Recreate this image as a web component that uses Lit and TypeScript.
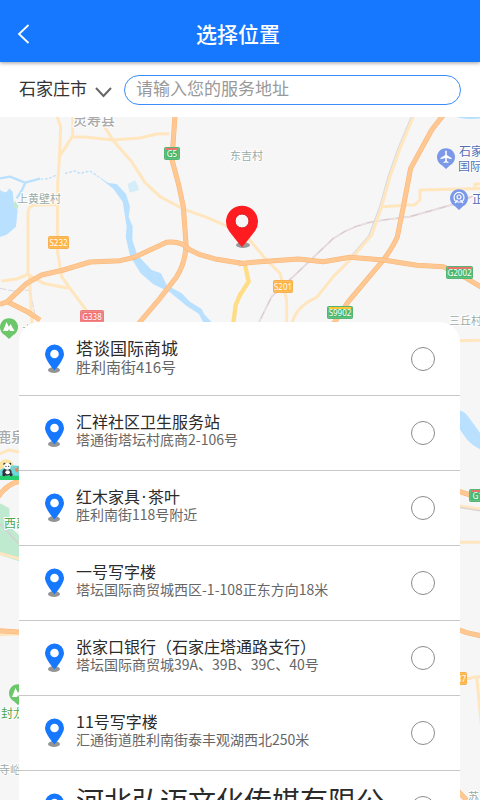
import { LitElement, html, svg, css } from "lit";
import { customElement, property, state } from "lit/decorators.js";
import { classMap } from "lit/directives/class-map.js";

interface Place {
  name: string;
  address: string;
  size?: "current" | "large";
}

const PLACES: Place[] = [
  { name: "塔谈国际商城", address: "胜利南街416号", size: "current" },
  { name: "汇祥社区卫生服务站", address: "塔通街塔坛村底商2-106号" },
  { name: "红木家具·茶叶", address: "胜利南街118号附近" },
  { name: "一号写字楼", address: "塔坛国际商贸城西区-1-108正东方向18米" },
  { name: "张家口银行（石家庄塔通路支行）", address: "塔坛国际商贸城39A、39B、39C、40号" },
  { name: "11号写字楼", address: "汇通街道胜利南街泰丰观湖西北250米" },
  { name: "河北弘迈文化传媒有限公", address: "塔坛国际商贸城", size: "large" },
];

/** Map canvas: roads, water, badges and labels. */
@customElement("city-map")
class CityMap extends LitElement {
  static styles = css`
    :host { display: block; background: #f6f6f6; }
    svg { display: block; width: 100%; height: 100%; }
    text { font-family: "Noto Sans CJK SC", sans-serif; font-size: 11px; paint-order: stroke; stroke: #fff; stroke-width: 2px; stroke-linejoin: round; }
    .road { fill: none; stroke-linejoin: round; stroke-linecap: butt; }
    .minor { stroke: #ffe6bf; stroke-width: 9; }
    .major-edge { stroke: #f8b779; stroke-width: 15; }
    .major { stroke: #ffc791; stroke-width: 12; }
    .yellow { stroke: #ffdc86; stroke-width: 13; }
    .rail { stroke: #dccccf; stroke-width: 5; }
    .rail-dash { stroke: #eee6e7; stroke-width: 3; stroke-dasharray: 22 22; }
    .bypass { stroke: #d9dcdf; stroke-width: 4; }
    .water { fill: #b9e1ff; }
    .stream { stroke: #b9e1ff; stroke-width: 7; }
    .dots { stroke: #b9e1ff; stroke-width: 4; stroke-dasharray: 8 5; }
    .town { fill: #a9a9a9; font-size: 14px; font-weight: 500; }
    .village { fill: #9aaba6; }
    .poi { fill: #5470b5; font-size: 12px; }
    .park { fill: #4fa552; font-size: 12px; }
    .badge { fill: #fff; font-size: 8px; stroke: none; text-anchor: middle; font-family: "Noto Sans", sans-serif; }
  `;

  private badge(x: number, y: number, w: number, label: string, fill: string, edge: string, top?: string) {
    return svg`
      <rect x=${x} y=${y} width=${w} height="13" rx="2" fill=${edge}></rect>
      <rect x=${x + 1} y=${y + 1} width=${w - 2} height="11" rx="1" fill=${fill} stroke="#fff" stroke-opacity=".5" stroke-width=".5"></rect>
      ${top ? svg`<rect x=${x + 2} y=${y + 1} width=${w - 4} height="2" fill=${top}></rect>` : ""}
      <text class="badge" x=${x + w / 2} y=${y + 10}>${label}</text>`;
  }

  private major(d: string) {
    return svg`<path class="road major-edge" d=${d}></path><path class="road major" d=${d}></path>`;
  }

  private marker(x: number, y: number, fill: string, glyph: unknown) {
    return svg`<g transform="translate(${x} ${y})">
      <path d="M0 12 L-4 8.2 A9 9 0 1 1 4 8.2Z" fill=${fill}></path>${glyph}</g>`;
  }

  render() {
    const tree = svg`<path d="M-6 4 L-2.500 -5 L0 0 L1.500 -3 L5.500 4 H1 L0 2 L-1 4Z" fill="#fff"></path>`;
    return html`<svg viewBox="0 117 480 683" preserveAspectRatio="xMidYMin slice" aria-hidden="true">
      <g transform="translate(0 110) scale(.33333)">
        <path class="water" d="M0 240 L12 247 L20 246 L28 235 L38 245 L42 280 L53 298 L48 350 L20 374 L0 381Z"></path>
        <path d="M38 290 L46 272 L56 290 L50 296Z" fill="#bfead0"></path>
        <path class="road stream" d="M0 205 L30 200 L75 218 L120 206 M76 218 L66 240 L50 265"></path>
        <path class="road dots" d="M122 208 L145 206 L170 195 M195 190 L225 183 L240 190 L270 183 L295 200"></path>
        <path class="water" d="M285 193 L325 219 L350 222 L378 252 L390 290 L386 320 L398 350 L397 390 L412 435 L455 480 L483 490 L500 525 L545 550 L570 575 L605 597 L612 612 L640 642 L612 642 L597 612 L560 588 L510 547 L460 523 L422 490 L390 438 L377 380 L380 350 L368 275 L340 236Z"></path>
        <path d="M383 222 L405 211 L413 225 L417 240 L389 248Z" fill="#d5edf9"></path>
        <path d="M0 535 L40 543 L90 540 L104 610" class="road" stroke="#d7d7df" stroke-width="3" stroke-dasharray="20 5"></path>
        <path class="road minor" d="M170 15 L182 50 L178 150 L173 220 L172 420 L185 500 L210 535 L262 605"></path>
        <path class="road minor" d="M218 15 V78 L178 140 M218 80 L260 82 L340 90 L420 84 L470 72 L508 71"></path>
        <path class="road minor" d="M310 45 L340 92 L395 155 L435 218 L480 260 L550 297 L620 322 L690 352"></path>
        <path class="road minor" d="M170 284 L104 285 Q84 287 84 310 V490 M5 513 L50 507 L84 493 L130 520 L205 535 M88 495 L96 640"></path>
        <path class="road yellow" d="M722 550 L707 585 L700 640"></path>
        ${this.major("M525 15 L516 150 L535 220 L550 290 L558 400 Q558 455 530 500 L480 565 L412 645")}
        ${this.major("M22 575 L85 607 L120 630")}
        ${this.major("M0 583 L22 575 L80 520 L125 495 L190 480 L270 456 L360 452 L400 443 L500 397 Q545 392 570 420 L600 434 L650 448 L725 460")}
      </g>
      <g transform="translate(240 110) scale(.33333)">
        <ellipse cx="695" cy="18" rx="47" ry="9" fill="#b3e2ff"></ellipse>
        <path class="road rail" d="M53 645 L95 560 L170 490 L280 385 Q345 340 430 330 L510 320 L640 283 L730 245"></path>
        <path class="road rail-dash" d="M53 645 L95 560 L170 490 L280 385 Q345 340 430 330 L510 320 L640 283 L730 245"></path>
        <path class="road bypass" d="M514 20 L474 115 L444 200 L419 290 L386 378 L325 448"></path>
        <path class="road minor" d="M520 20 L480 115 L450 200 L425 290 L395 375 L330 450 L280 500 L230 562 Q165 590 155 645"></path>
        <path class="road minor" d="M425 290 L525 284 L540 270 V240 L725 235 M705 235 V222 H725"></path>
        <path class="road minor" d="M25 385 L75 445 L120 490 L140 570 L140 645"></path>
        <path class="road yellow" d="M15 465 L26 515 L0 555"></path>
        ${this.major("M610 15 L575 60 L512 175 L490 290 L472 380 Q460 410 430 450 L325 575 L278 645")}
        ${this.major("M-4 461 L60 455 L175 447 L250 455 L330 442 L430 450 L530 466 L610 470 L680 505 L725 532")}
      </g>
      <g transform="translate(0 320) scale(.33333)">
        <path d="M0 550 L28 565 L30 620 L62 650 V725 L0 705Z" fill="#bfead0"></path>
        <path class="road minor" d="M0 402 L25 390 L70 398 M0 700 L65 718"></path>
        <path class="road" stroke="#d8cdd0" stroke-width="4" d="M0 612 L65 680"></path>
        ${this.major("M-5 530 Q20 490 65 482")}
        <circle cx="18" cy="442" r="24" fill="#ffe5a0"></circle>
        <path d="M0 450 Q30 430 65 440 V478 H0Z" fill="#6dd7dc"></path>
        <path d="M0 467 H65 V480 H0Z" fill="#27cf70"></path>
        <path d="M42 440 l5 8 8 -10 v20 l-9 -5z" fill="#e78650"></path>
        <g fill="#303336"><circle cx="14" cy="432" r="4"></circle><circle cx="30" cy="432" r="4"></circle><ellipse cx="21" cy="456" rx="14" ry="11"></ellipse></g>
        <circle cx="22" cy="439" r="10" fill="#fff"></circle><ellipse cx="23" cy="457" rx="7" ry="6" fill="#fff"></ellipse>
        <g fill="#303336"><circle cx="18" cy="439" r="2"></circle><circle cx="26" cy="439" r="2"></circle><circle cx="12" cy="464" r="5"></circle><circle cx="33" cy="464" r="5"></circle></g>
      </g>
      <g transform="translate(240 320) scale(.33333)">
        <path class="water" d="M650 270 Q670 270 685 290 L725 345 V390 Q700 380 682 360 L650 315Z"></path>
        <path class="road minor" d="M650 62 L725 61 M650 557 L725 568 M650 667 H725"></path>
        <path class="road" stroke="#ded3d4" stroke-width="4" d="M650 561 L725 573"></path>
        ${this.major("M650 512 L700 528")}
      </g>
      <g transform="translate(240 560) scale(.33333)">
        <path class="road minor" d="M680 356 L712 350 L725 350 M710 350 L724 495"></path>
        ${this.major("M650 207 L680 218 L725 228")}
        ${this.major("M650 690 L695 735")}
      </g>
      <g transform="translate(0 560) scale(.33333)">
        <path class="road minor" d="M0 224 L65 221"></path>
        ${this.major("M-5 212 L65 217")}
      </g>
      ${this.badge(164, 147, 16, "G5", "#49b86e", "#3eaa63", "#e9746c")}
      ${this.badge(48, 236, 21, "S232", "#ffb344", "#f3a538")}
      ${this.badge(80, 310, 24, "G338", "#f17474", "#e66a6a")}
      ${this.badge(273, 280, 20, "S201", "#ffb344", "#f3a538")}
      ${this.badge(327, 306, 26, "S9902", "#49b86e", "#3eaa63", "#ffc533")}
      ${this.badge(446, 266, 27, "G2002", "#49b86e", "#3eaa63", "#e9746c")}
      ${this.badge(469, 489, 22, "G18", "#49b86e", "#3eaa63", "#e9746c")}
      ${this.badge(447, 672, 20, "S337", "#ffb344", "#f3a538")}
      ${this.marker(446, 157, "#7b98e9", svg`<path d="M-.8 -6 Q0 -7 .8 -6 V-2 L5.500 1 V2.200 L.8 1 V4 L2.500 5.300 V6 L0 5.400 L-2.500 6 V5.300 L-.8 4 V1 L-5.500 2.200 V1 L-.8 -2Z" fill="#fff"></path>`)}
      ${this.marker(459, 198, "#7b98e9", svg`<g fill="none" stroke="#fff" stroke-width="1.200"><path d="M-3.500 3 A5 5 0 1 1 3.500 3"></path><circle cx="0" cy="-1" r="2"></circle><path d="M-4 5 L-1.500 2 M4 5 L1.500 2 M-3.500 4 H3.500"></path></g>`)}
      ${this.marker(9, 327, "#6cc76a", tree)}
      ${this.marker(18, 693, "#6cc76a", tree)}
      <text class="town" x="73" y="125">灵寿县</text>
      <text class="village" x="230" y="160">东吉村</text>
      <text class="village" x="17" y="203">上黄壁村</text>
      <text class="village" x="449" y="325">三丘村</text>
      <text class="village" x="22" y="334">大</text>
      <text class="village" x="-1" y="774">寺峪</text>
      <text class="village" x="468" y="801">苏</text>
      <text class="poi" x="459" y="156">石家庄</text>
      <text class="poi" x="458" y="171">国际机场</text>
      <text class="poi" x="472" y="204">正定</text>
      <text class="town" x="-3" y="442">鹿泉</text>
      <text class="park" x="4" y="528">西部</text>
      <text class="park" x="1" y="718">封龙</text>
      <ellipse cx="243" cy="245" rx="7" ry="3" fill="#999"></ellipse>
      <path d="M242 247 Q239 244 229 231 A16 16 0 1 1 255 231 Q245 244 242 247Z" fill="#ff1c20"></path>
      <circle cx="242" cy="221" r="7" fill="#f6f6f6" stroke="#d81116" stroke-width="1"></circle>
    </svg>`;
  }
}

/** One selectable address in the sheet. */
@customElement("place-row")
class PlaceRow extends LitElement {
  @property({ attribute: false }) place!: Place;
  @property({ type: Boolean }) checked = false;

  static styles = css`
    :host { display: block; border-bottom: 1px solid #c8c8c8; }
    .row { display: flex; align-items: flex-start; padding: 16px 25px 0; height: 58px; cursor: pointer; }
    .current { height: 57px; }
    .pin { flex: none; width: 20px; height: 30px; padding-top: 6px; margin-right: 12px; }
    .words { flex: 1; min-width: 0; white-space: nowrap; }
    .name, .address { display: block; line-height: 18px; }
    .name { font-size: 16px; color: #2b2b2b; }
    .address { font-size: 14px; color: #666; }
    .current .name { font-size: 17px; line-height: 20px; }
    .current .address { font-size: 15px; }
    .large .name { font-size: 28px; line-height: 26px; }
    .dot { display: inline-block; width: 8px; text-align: center; font-family: "Noto Sans", sans-serif; line-height: 16px; }
    input { appearance: none; flex: none; box-sizing: border-box; width: 24px; height: 24px; margin: 9px 0 0; border: 1px solid #8c8c8c; border-radius: 50%; background: #fff; }
    input:checked { border: 7px solid #1677ff; }
  `;

  render() {
    const size = this.place.size;
    const parts = this.place.name.split("·");
    return html`<label class=${classMap({ row: true, current: size === "current", large: size === "large" })}>
      <svg class="pin" viewBox="0 0 20 30" aria-hidden="true">
        <ellipse cx="10" cy="26" rx="6" ry="3" fill="#949494"></ellipse>
        <path d="M10.500 26.500 C8.500 24 1 15.500 1 10 A9.500 9.500 0 0 1 20 10 C20 15.500 12.500 24 10.500 26.500Z" fill="#1677ff"></path>
        <circle cx="10.500" cy="10" r="4.300" fill="#fff"></circle>
      </svg>
      <span class="words">
        <span class="name">${parts.map((part, i) => (i ? html`<span class="dot">·</span>${part}` : part))}</span>
        <span class="address">${this.place.address}</span>
      </span>
      <input type="radio" name="place" .checked=${this.checked} />
    </label>`;
  }
}

@customElement("app-root")
class AppRoot extends LitElement {
  @state() private selected = -1;

  static styles = css`
    :host { display: flex; flex-direction: column; height: 100vh; overflow: hidden; font-family: "Noto Sans CJK SC", sans-serif; background: #fff; }
    header { position: relative; z-index: 1; flex: none; display: grid; grid-template-columns: 44px 1fr 48px; align-items: center; height: 58px; padding-top: 4px; background: #1677ff; box-shadow: 0 1px 4px rgba(0, 0, 0, 0.4); }
    h1 { margin: 0; font-size: 21px; line-height: 28px; font-weight: 500; color: #fff; text-align: center; }
    .back { display: flex; align-items: center; width: 44px; height: 40px; padding: 2px 0 0 17px; border: 0; background: none; }
    .search { flex: none; display: flex; align-items: center; height: 55px; padding: 0 19px; background: #fff; }
    .city { position: relative; flex: none; width: 105px; }
    select { display: block; box-sizing: border-box; appearance: none; width: 100%; height: 30px; padding: 0 0 4px; border: 0; background: none; font: inherit; font-size: 17px; line-height: 24px; color: #333; }
    .chevron { position: absolute; right: 12px; top: 11px; pointer-events: none; }
    .query { flex: 1; min-width: 0; box-sizing: border-box; height: 30px; padding: 0 11px 4px; border: 1px solid #3b8bf8; border-radius: 15px; background: #fff; font: inherit; font-size: 17px; color: #333; outline: 0; }
    .query::placeholder { color: #999; opacity: 1; }
    main { position: relative; flex: 1; min-height: 0; display: flex; flex-direction: column; }
    city-map { position: absolute; inset: 0; }
    .sheet { position: relative; flex: 1; min-height: 0; margin: 205px 20px 0 19px; border-radius: 20px 20px 0 0; background: #fff; overflow: auto; scrollbar-width: none; }
  `;

  render() {
    return html`
      <header>
        <button class="back" aria-label="返回">
          <svg width="13" height="20" viewBox="0 0 13 20"><path d="M11.500 1 L2 10 L11.500 19" fill="none" stroke="#fff" stroke-width="1.800"></path></svg>
        </button>
        <h1>选择位置</h1>
      </header>
      <div class="search">
        <div class="city">
          <select aria-label="城市"><option>石家庄市</option></select>
          <svg class="chevron" width="17" height="12" viewBox="0 0 17 12" aria-hidden="true"><path d="M1 2 L8.500 10 L16 2" fill="none" stroke="#666" stroke-width="2"></path></svg>
        </div>
        <input class="query" type="text" aria-label="服务地址" placeholder="请输入您的服务地址" />
      </div>
      <main>
        <city-map></city-map>
        <div class="sheet">
          ${PLACES.map((place, i) => html`<place-row .place=${place} .checked=${this.selected === i} @change=${() => (this.selected = i)} @input=${() => (this.selected = i)}></place-row>`)}
        </div>
      </main>
    `;
  }
}
